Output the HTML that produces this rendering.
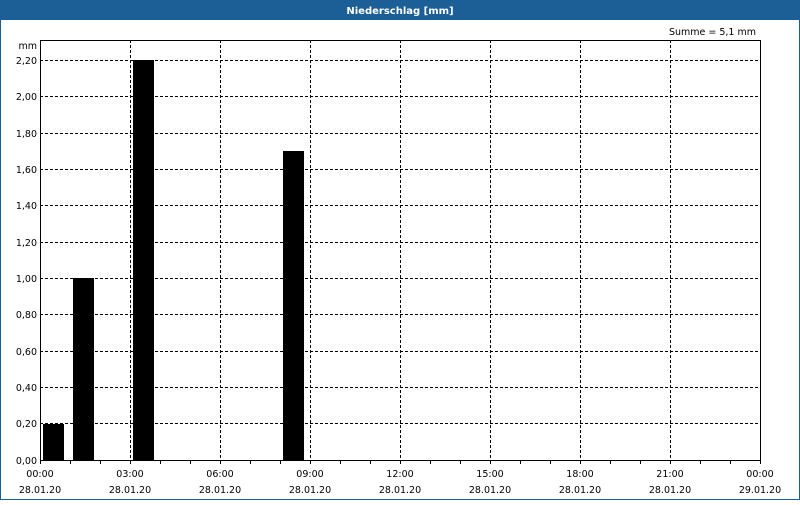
<!DOCTYPE html>
<html><head><meta charset="utf-8"><style>
body{margin:0;width:800px;height:500px;overflow:hidden;background:#fff}
svg text{font-family:"DejaVu Sans","Liberation Sans",sans-serif;font-size:9.5px;fill:#000}
</style></head><body>
<svg width="800" height="500" xmlns="http://www.w3.org/2000/svg">
<rect x="0" y="0" width="800" height="500" fill="#fff"/>
<rect x="0.5" y="0.5" width="799" height="499" fill="none" stroke="#1c5f96"/>
<rect x="0" y="0" width="800" height="20" fill="#1c5f96"/>
<text x="400" y="14" text-anchor="middle" style="fill:#fff;font-weight:bold;font-size:10px">Niederschlag [mm]</text>
<text x="756" y="35" text-anchor="end">Summe = 5,1 mm</text>
<text x="37" y="49" text-anchor="end">mm</text>
<g stroke="#000" stroke-width="1" stroke-dasharray="3,2" shape-rendering="crispEdges">
<path d="M40 60.5H760M40 96.5H760M40 133.5H760M40 169.5H760M40 205.5H760M40 242.5H760M40 278.5H760M40 314.5H760M40 351.5H760M40 387.5H760M40 423.5H760"/>
<path d="M130.5 40V460M220.5 40V460M310.5 40V460M400.5 40V460M490.5 40V460M580.5 40V460M670.5 40V460"/>
</g>
<g fill="#000" shape-rendering="crispEdges">
<rect x="43" y="424" width="21" height="36"/>
<rect x="73" y="278" width="21" height="182"/>
<rect x="133" y="60" width="21" height="400"/>
<rect x="283" y="151" width="21" height="309"/>
</g>
<rect x="40.5" y="40.5" width="720" height="420" fill="none" stroke="#000" shape-rendering="crispEdges"/>
<g stroke="#000" shape-rendering="crispEdges">
<path d="M40.5 460V464M70.5 460V464M100.5 460V464M130.5 460V464M160.5 460V464M190.5 460V464M220.5 460V464M250.5 460V464M280.5 460V464M310.5 460V464M340.5 460V464M370.5 460V464M400.5 460V464M430.5 460V464M460.5 460V464M490.5 460V464M520.5 460V464M550.5 460V464M580.5 460V464M610.5 460V464M640.5 460V464M670.5 460V464M700.5 460V464M730.5 460V464M760.5 460V464"/>
</g>
<g text-anchor="end">
<text x="37" y="64">2,20</text><text x="37" y="100">2,00</text><text x="37" y="137">1,80</text>
<text x="37" y="173">1,60</text><text x="37" y="209">1,40</text><text x="37" y="246">1,20</text>
<text x="37" y="282">1,00</text><text x="37" y="318">0,80</text><text x="37" y="355">0,60</text>
<text x="37" y="391">0,40</text><text x="37" y="427">0,20</text><text x="37" y="464">0,00</text>
</g>
<g text-anchor="middle">
<text x="40" y="477">00:00</text><text x="40" y="493">28.01.20</text>
<text x="130" y="477">03:00</text><text x="130" y="493">28.01.20</text>
<text x="220" y="477">06:00</text><text x="220" y="493">28.01.20</text>
<text x="310" y="477">09:00</text><text x="310" y="493">28.01.20</text>
<text x="400" y="477">12:00</text><text x="400" y="493">28.01.20</text>
<text x="490" y="477">15:00</text><text x="490" y="493">28.01.20</text>
<text x="580" y="477">18:00</text><text x="580" y="493">28.01.20</text>
<text x="670" y="477">21:00</text><text x="670" y="493">28.01.20</text>
<text x="760" y="477">00:00</text><text x="760" y="493">29.01.20</text>
</g>
</svg>
</body></html>
